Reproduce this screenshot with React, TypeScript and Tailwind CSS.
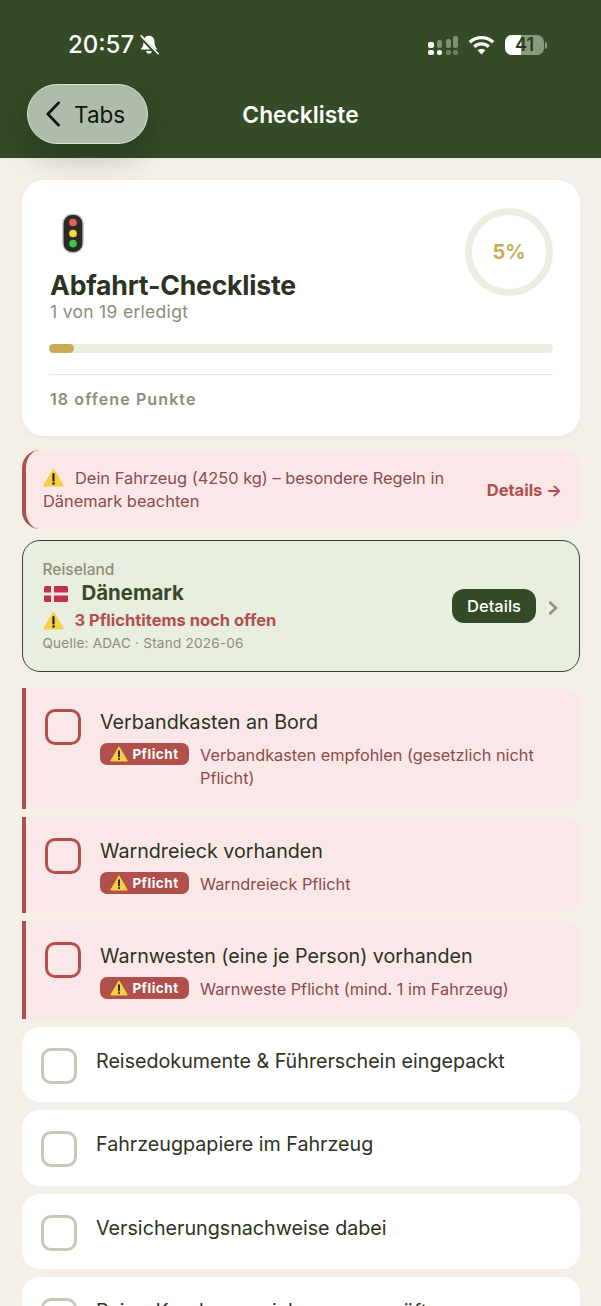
const Warn = ({ className }: { className: string }) => (
  <svg viewBox="0 0 24 22" className={className}>
    <path d="M12 1.500 23 20.500H1Z" fill="#f6cf45" stroke="#f6cf45" strokeWidth="1.600" strokeLinejoin="round" />
    <path d="M12 7v7.500" stroke="#2b2415" strokeWidth="2.600" strokeLinecap="round" />
    <circle cx="12" cy="18" r="1.500" fill="#2b2415" />
  </svg>
);

const Box = ({ red }: { red?: boolean }) => (
  <div className={`w-9 h-9 shrink-0 rounded-[10px] border-[3px] ${red ? "border-[#b04f4b]" : "border-[#cbc7b9]"}`} />
);

const Pflicht = () => (
  <span className="flex items-center justify-center gap-[4px] w-[89px] h-[22px] shrink-0 rounded-[7px] bg-[#b04f4b] text-white text-[13.5px] font-bold tracking-[0.5px]">
    <Warn className="w-[18px] h-[16px]" />
    Pflicht
  </span>
);

const required = [
  { title: "Verbandkasten an Bord", note: "Verbandkasten empfohlen (gesetzlich nicht Pflicht)", h: "h-[121px]", top: "-mt-[1px]" },
  { title: "Warndreieck vorhanden", note: "Warndreieck Pflicht", h: "h-[96px]", top: "-mt-[1px]" },
  { title: "Warnwesten (eine je Person) vorhanden", note: "Warnweste Pflicht (mind. 1 im Fahrzeug)", h: "h-[98px]", top: "mt-0" },
];

const items = [
  "Reisedokumente & Führerschein eingepackt",
  "Fahrzeugpapiere im Fahrzeug",
  "Versicherungsnachweise dabei",
  "Reise-Krankenversicherung geprüft",
];

export default function App() {
  return (
    <div className="w-[601px] h-[1306px] overflow-hidden bg-[#f4efe8] font-['Inter',sans-serif] text-[#2c3322]">
      <header className="relative z-10 h-[158px] bg-[#354a26] text-white">
        <div className="flex items-center justify-between pt-[30px] pl-[68px] pr-[54px] h-[60px]">
          <div className="flex items-center gap-[4px]">
            <span className="text-[24px] font-medium leading-none">20:57</span>
            <svg viewBox="0 0 24 24" className="w-[22px] h-[22px]" fill="white">
              <path d="M12 2c-3.800 0-6 2.800-6 6.400 0 3.800-.9 5.500-2.500 7.200-.5.600-.1 1.400.6 1.400h15.800c.7 0 1.100-.8.6-1.400-1.600-1.700-2.500-3.400-2.500-7.200C18 4.800 15.800 2 12 2Z" />
              <path d="M9 18.500a3 3 0 0 0 6 0Z" />
              <path d="M3.500 3.500 21 22" stroke="#354a26" strokeWidth="4" />
              <path d="M3.500 2 22 21.500" stroke="white" strokeWidth="1.800" strokeLinecap="round" />
            </svg>
          </div>
          <div className="flex items-center">
            <svg viewBox="0 0 30 19" className="w-[30px] h-[19px]">
              <rect x="0" y="6" width="6" height="6" rx="2" fill="white" />
              <rect x="0" y="14" width="6" height="5" rx="2" fill="white" />
              <rect x="9" y="14" width="5" height="5" rx="2" fill="white" />
              <rect x="9" y="4" width="5" height="8" rx="2" fill="#7f8f73" />
              <rect x="18" y="3" width="5" height="9" rx="2" fill="#7f8f73" />
              <rect x="18" y="14" width="5" height="5" rx="2" fill="#6d7f60" />
              <rect x="25" y="0" width="5" height="12" rx="2" fill="#7f8f73" />
              <rect x="25" y="14" width="5" height="5" rx="2" fill="#6d7f60" />
            </svg>
            <svg viewBox="0 0 24 18" className="w-[27px] h-[20px] ml-[10px]" fill="none" stroke="white" strokeWidth="3">
              <path d="M1.500 6.500C7.500 1 16.500 1 22.500 6.500" />
              <path d="M5.500 10.500c3.800-3.400 9.200-3.400 13 0" />
              <path d="M12 17.500 8.500 13.700c2-1.600 5-1.600 7 0Z" fill="white" stroke="none" />
            </svg>
            <div className="relative ml-[10px] w-[39px] h-[20px] rounded-[7px] bg-[#8a9a7f] overflow-hidden flex items-center justify-center">
              <div className="absolute left-0 top-0 bottom-0 w-[16px] bg-white" />
              <span className="relative text-[18px] font-semibold text-[#2c3a20] leading-none">41</span>
            </div>
            <div className="ml-[1px] w-[2px] h-[7px] rounded-r-full bg-[#8a9a7f]" />
          </div>
        </div>
        <div className="relative h-[60px] mt-[24px] flex items-center justify-center">
          <div className="absolute left-[27px] top-0 w-[121px] h-[60px] rounded-[30px] bg-[#b0bcab] border border-[#d6e2cd] shadow-[0_12px_32px_rgba(0,0,0,0.22)] flex items-center gap-[13px] pl-[17px] text-[#10150c]">
            <svg viewBox="0 0 16 28" className="w-[16px] h-[26px]" fill="none" stroke="currentColor" strokeWidth="3" strokeLinecap="round" strokeLinejoin="round">
              <path d="M14 2 2.500 14 14 26" />
            </svg>
            <span className="text-[22.5px] leading-none pt-[2px]">Tabs</span>
          </div>
          <span className="text-[22.8px] font-semibold leading-none pt-[3px]">Checkliste</span>
        </div>
      </header>

      <main className="flex flex-col gap-[8px] pl-[22px] pr-[21px] pt-[22px]">
        <section className="relative h-[256px] mb-[6px] rounded-[22px] bg-white px-[27px] pt-[33px] shadow-[0_1px_6px_rgba(60,50,30,0.05)]">
          <svg viewBox="0 0 24 44" className="ml-[13px] w-[22px] h-[41px]">
            <rect x="1" y="1" width="22" height="42" rx="10" fill="#2a2b27" stroke="#c5c7c9" strokeWidth="1.500" />
            <circle cx="12" cy="10" r="4.200" fill="#e8595f" />
            <circle cx="12" cy="22" r="4.200" fill="#f5d93d" />
            <circle cx="12" cy="33" r="4.200" fill="#3ec743" />
          </svg>
          <h1 className="mt-[15px] ml-[1px] text-[26.6px] leading-[32px] font-bold tracking-[-0.2px] text-[#2c3322]">Abfahrt-Checkliste</h1>
          <p className="ml-[1px] text-[17.5px] leading-[22px] tracking-[0.3px] text-[#908c78]">1 von 19 erledigt</p>
          <div className="mt-[21px] h-[9px] rounded-full bg-[#e8eee0]">
            <div className="w-[25px] h-[9px] rounded-full bg-[#c8ad54]" />
          </div>
          <div className="mt-[21px] border-t border-[#ebe8e0] pt-[14px] pl-[1px] text-[16px] leading-[20px] font-semibold tracking-[1.1px] text-[#908c78]">18 offene Punkte</div>
          <div className="absolute right-[27px] top-[28px] w-[88px] h-[88px] rounded-full border-[7px] border-[#e8eee0] flex items-center justify-center text-[20px] font-bold text-[#c8ad54]">5%</div>
        </section>

        <section className="flex items-center justify-between h-[79px] rounded-[18px] border-l-[4px] border-[#b04f4b] bg-[#fae8e8] pl-[17px] pr-[18px] mb-[3px]">
          <p className="w-[420px] text-[16.4px] leading-[23px] text-[#8c4a48]">
            <Warn className="inline-block w-[21px] h-[19px] mr-[11px] align-[-3px]" />
            Dein Fahrzeug (4250 kg) – besondere Regeln in Dänemark beachten
          </p>
          <span className="pt-[1px] text-[16.5px] font-bold text-[#b04f4b]">Details →</span>
        </section>

        <section className="relative h-[132px] mb-[8px] rounded-[18px] border-[1.5px] border-[#354a26] bg-[#e8eee0] pl-[19.5px] pt-[19px]">
          <div className="text-[15.5px] leading-[19px] font-medium text-[#908c78]">Reiseland</div>
          <div className="flex items-center h-[28px] pt-[1px] text-[20.4px] font-bold text-[#354a26]">
            <svg viewBox="0 0 24 16" className="ml-[1px] w-[24px] h-[16px] mr-[14px]">
              <rect width="24" height="16" rx="1.500" fill="#c4314b" />
              <rect x="7" width="3" height="16" fill="#f6e6e6" />
              <rect y="6.500" width="24" height="3" fill="#f6e6e6" />
            </svg>
            Dänemark
          </div>
          <div className="flex items-center h-[26px] text-[16.5px] font-bold text-[#b04f4b]">
            <Warn className="w-[21px] h-[19px] mr-[11px]" />
            3 Pflichtitems noch offen
          </div>
          <div className="pt-[1px] text-[13.6px] leading-[18px] tracking-[0.2px] text-[#908c78]">Quelle: ADAC · Stand 2026-06</div>
          <div className="absolute right-[43px] top-[48px] w-[84px] h-[34px] rounded-[12px] bg-[#354a26] text-white text-[16.5px] font-medium flex items-center justify-center">Details</div>
          <svg viewBox="0 0 10 14" className="absolute right-[21px] top-[60px] w-[10px] h-[14px]" fill="none" stroke="#989480" strokeWidth="2.800">
            <path d="M1.500 1 8 7l-6.500 6" />
          </svg>
        </section>

        {required.map((r) => (
          <section key={r.title} className={`flex ${r.h} bg-[#fae8e8] border-l-[4px] border-[#b04f4b] rounded-r-[18px] pl-[19px] pt-[21px] pr-[30px] gap-[19px]`}>
            <Box red />
            <div className={`flex-1 ${r.top}`}>
              <div className="text-[19.7px] leading-[28px] text-[#2c3322]">{r.title}</div>
              <div className="flex gap-[11px] mt-[7px]">
                <Pflicht />
                <p className="mt-[1px] text-[16.3px] leading-[23px] text-[#8c4a48]">{r.note}</p>
              </div>
            </div>
          </section>
        ))}

        {items.map((t) => (
          <section key={t} className="flex shrink-0 items-start h-[75.3px] rounded-[18px] bg-white pl-[19px] pt-[21px] gap-[19px]">
            <Box />
            <div className="text-[19.7px] leading-[28px] -mt-[1px] text-[#2c3322]">{t}</div>
          </section>
        ))}
      </main>
    </div>
  );
}
